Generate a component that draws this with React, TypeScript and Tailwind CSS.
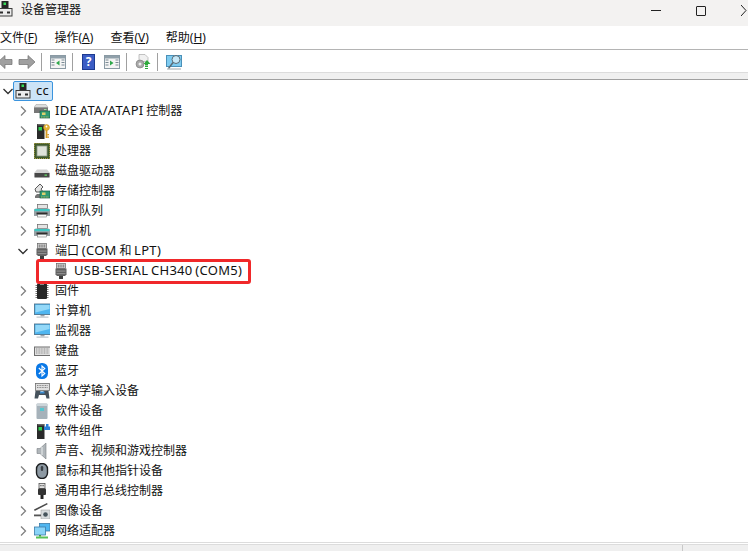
import type { ReactNode } from 'react';

const Chevron = ({ open = false }: { open?: boolean }) => (
  <svg width="10" height="10" viewBox="0 0 10 10" fill="none" stroke={open ? '#303030' : '#808080'} strokeWidth="1.3" className="shrink-0">
    {open ? <path d="M.5 3l4.500 4.500L9.500 3" /> : <path d="M3 .5L7.500 5 3 9.500" />}
  </svg>
);

const Svg = ({ children }: { children: ReactNode }) => (
  <svg width="16" height="16" viewBox="0 0 16 16" className="shrink-0">{children}</svg>
);

const Board = () => (
  <>
    <rect x="6" y="8" width="10" height="7" fill="#2f9a74" stroke="#1f5f48" strokeWidth=".7" />
    <rect x="8" y="9.500" width="3.500" height="2.500" fill="#e0d070" />
    <path d="M7 14h8" stroke="#e0c050" strokeWidth=".8" strokeDasharray="1 .6" />
  </>
);

const Printer = () => (
  <Svg>
    <rect x="3.500" y="1.500" width="10" height="4" fill="#e4e4e4" stroke="#666" strokeWidth=".7" />
    <path d="M0 7.500Q0 5.500 2 5.500h12q2 0 2 2V13H0z" fill="#98a0a4" />
    <rect x=".5" y="6" width="15" height="2.200" fill="#3fc4c0" />
    <rect x="2.500" y="9.500" width="11" height="2" fill="#2c2c2c" />
    <rect x="3.500" y="11.500" width="9" height="2.500" fill="#f6f6f6" stroke="#666" strokeWidth=".5" />
  </Svg>
);

const Monitor = () => (
  <Svg>
    <rect x=".5" y="1" width="16" height="10.500" fill="#4fb6f0" stroke="#4d7590" strokeWidth=".9" />
    <path d="M1.500 2h14v4L1.500 9.500z" fill="#93d8f8" />
    <rect x="6.500" y="12" width="4" height="1.500" fill="#9aa4aa" />
    <rect x="2.500" y="13.500" width="12" height="1.300" fill="#c4cbd0" />
  </Svg>
);

const PortIcon = () => (
  <Svg>
    <rect x="3.500" y=".5" width="9" height="5" fill="#d2d2d2" stroke="#666" strokeWidth=".7" />
    <path d="M5.300 1.500v3M7.100 1.500v3M8.900 1.500v3M10.700 1.500v3" stroke="#666" strokeWidth=".8" />
    <path d="M2.500 5.500h11v6l-1.500 1.500H4l-1.500-1.500z" fill="#606060" />
    <rect x="3.500" y="7.500" width="9" height="1.200" fill="#8e8e8e" />
    <rect x="3.500" y="10" width="9" height="1.200" fill="#8e8e8e" />
    <rect x="6" y="13" width="4" height="3" fill="#3e3e3e" />
  </Svg>
);

const Tower = () => (
  <>
    <rect x="3" y="1" width="7.500" height="15" fill="#2a2a2a" />
    <rect x="3.500" y="1" width="6.500" height="1.500" fill="#666" />
    <rect x="4.500" y="4" width="3.500" height="3.500" fill="#2fd050" />
  </>
);

const icons: Record<string, ReactNode> = {
  ide: (
    <Svg>
      <path d="M2 1.500h10l2 3H0z" fill="#dcdcdc" stroke="#999" strokeWidth=".5" />
      <rect x="0" y="4.500" width="14" height="5.500" fill="#777" />
      <rect x="10" y="6" width="2.500" height="1" fill="#9de09d" />
      <Board />
    </Svg>
  ),
  security: (
    <Svg>
      <Tower />
      <circle cx="12.500" cy="4.500" r="3" fill="#e4b232" stroke="#b98a1e" strokeWidth=".5" />
      <circle cx="12.500" cy="3.500" r=".9" fill="#fff" />
      <rect x="11.600" y="7" width="1.800" height="8" fill="#d49a24" />
      <rect x="13.300" y="11" width="1.700" height="1.300" fill="#d49a24" />
      <rect x="13.300" y="13.500" width="1.700" height="1.300" fill="#d49a24" />
    </Svg>
  ),
  cpu: (
    <Svg>
      <rect x="0" y="0" width="16" height="16" fill="#3f5a2c" />
      <rect x=".4" y=".4" width="15.200" height="15.200" fill="none" stroke="#d8b850" strokeWidth=".8" strokeDasharray="1 1" />
      <rect x="3" y="3" width="10" height="10" fill="#dfe3da" stroke="#8d9a88" strokeWidth=".8" />
    </Svg>
  ),
  disk: (
    <Svg>
      <path d="M3 6.500h10l2.500 3V14H.5V9.500z" fill="#d2d2d2" />
      <rect x=".5" y="10" width="15" height="4.500" fill="#484848" />
      <rect x="10.500" y="11.500" width="2.500" height="1.300" fill="#62d862" />
    </Svg>
  ),
  storage: (
    <Svg>
      <path d="M1 6l5-5 3 3-2 2 2 3H2z" fill="#e4e4e4" stroke="#333" strokeWidth=".8" />
      <path d="M3 11h3v4H1v-2z" fill="#777" />
      <Board />
    </Svg>
  ),
  printer: <Printer />,
  port: <PortIcon />,
  firmware: (
    <Svg>
      <rect x="3" y=".5" width="10" height="15.500" rx="1" fill="#262626" />
      <path d="M1.500 2.500H3M1.500 4.500H3M1.500 6.500H3M1.500 8.500H3M1.500 10.500H3M1.500 12.500H3M1.500 14.500H3M13 2.500h1.500M13 4.500h1.500M13 6.500h1.500M13 8.500h1.500M13 10.500h1.500M13 12.500h1.500M13 14.500h1.500" stroke="#777" strokeWidth="1" />
      <rect x="6" y=".5" width="4" height="1.500" fill="#8a8a8a" />
    </Svg>
  ),
  monitor: <Monitor />,
  keyboard: (
    <Svg>
      <rect x=".5" y="4" width="16" height="8.500" fill="#e0e0e0" stroke="#6f6f6f" />
      <path d="M2 6h13M2 8h13M2 10h13" stroke="#8f8f8f" strokeWidth="1.100" strokeDasharray="1 .6" />
    </Svg>
  ),
  bluetooth: (
    <Svg>
      <rect x="2" y="0" width="12" height="16" rx="5.500" fill="#0a78e6" />
      <path d="M4.800 5l6 5.500L8 13V3l2.800 2.500-6 5.500" fill="none" stroke="#fff" strokeWidth="1.100" />
    </Svg>
  ),
  hid: (
    <Svg>
      <rect x="1.500" y=".5" width="14" height="7" fill="#e0e0e0" stroke="#6f6f6f" strokeWidth=".8" />
      <path d="M3 2.500h11M3 4.500h11" stroke="#888" strokeDasharray="1 .6" />
      <path d="M.5 15.500l1-7.500h5v2h3V8h5l1 7.500h-3l-1-3.500H5l-1 3.500z" fill="#46525c" />
      <rect x="6" y="8.500" width="4.500" height="2" fill="#3a8bd0" />
    </Svg>
  ),
  softdev: (
    <Svg>
      <rect x="2.500" y=".5" width="11" height="15.500" rx="1" fill="#a6b2ba" />
      <rect x="3" y="1" width="10" height="2" fill="#ccd5da" />
      <rect x="6" y="5" width="4" height="3" fill="#55c6d0" />
    </Svg>
  ),
  softcomp: (
    <Svg>
      <Tower />
      <path d="M10 3.500h2V1h2.500v2.500H16v3.500h-6z" fill="#2a80d8" />
    </Svg>
  ),
  sound: (
    <Svg>
      <path d="M3 5.500h3L12 0v16l-6-5.500H3z" fill="#b0b6ba" stroke="#7a8084" strokeWidth=".6" />
      <path d="M8 4v8" stroke="#d8dcde" strokeWidth="1.500" />
    </Svg>
  ),
  mouse: (
    <Svg>
      <rect x="2.500" y=".5" width="11" height="15" rx="5.500" fill="#8d99a3" stroke="#1c1e20" strokeWidth="1.400" />
      <rect x="6.800" y="3" width="2.400" height="5" rx="1.200" fill="#3a4046" />
    </Svg>
  ),
  usb: (
    <Svg>
      <rect x="5" y=".5" width="6" height="5" fill="#e0e0e0" stroke="#555" strokeWidth=".8" />
      <rect x="6.300" y="2" width="1.200" height="1.200" fill="#555" />
      <rect x="8.500" y="2" width="1.200" height="1.200" fill="#555" />
      <rect x="4" y="5.500" width="8" height="6.500" rx="1" fill="#333" />
      <rect x="6.500" y="12" width="3" height="4" fill="#222" />
    </Svg>
  ),
  imaging: (
    <Svg>
      <path d="M0 6.500L13 0l.7 1.300L.7 8z" fill="#4a4a4a" />
      <rect x="7" y="7" width="9" height="9" fill="#d8dcde" stroke="#999" strokeWidth=".5" />
      <circle cx="11.500" cy="11.500" r="2.300" fill="#46545c" />
      <rect x="0" y="11.500" width="7" height="1.800" fill="#555" />
    </Svg>
  ),
  network: (
    <Svg>
      <rect x="5.500" y=".5" width="10.500" height="7.500" fill="#4fb6f0" stroke="#3a7ca8" strokeWidth=".8" />
      <rect x=".5" y="4" width="11" height="8" fill="#8ad4f8" stroke="#3a7ca8" strokeWidth=".8" />
      <rect x="2" y="13.500" width="12" height="2" fill="#58c058" />
      <rect x="5" y="12" width="2" height="1.500" fill="#3ea03e" />
    </Svg>
  ),
  computer: (
    <Svg>
      <rect x="4.500" y="0" width="7" height="7" fill="#262626" />
      <rect x="6.500" y="1.500" width="2.500" height="2.500" fill="#36dc58" />
      <rect x="1" y="7.500" width="14" height="7.500" fill="#ececec" stroke="#3c3c3c" />
      <rect x="3" y="10.500" width="3" height="2" fill="#2c2c2c" />
      <rect x="10" y="10.500" width="3" height="2" fill="#2c2c2c" />
    </Svg>
  ),
};

const rowsBefore = [
  ['ide', 'IDE ATA/ATAPI ', '控制器'],
  ['security', '', '安全设备'],
  ['cpu', '', '处理器'],
  ['disk', '', '磁盘驱动器'],
  ['storage', '', '存储控制器'],
  ['printer', '', '打印队列'],
  ['printer', '', '打印机'],
];

const rowsAfter = [
  ['firmware', '固件'],
  ['monitor', '计算机'],
  ['monitor', '监视器'],
  ['keyboard', '键盘'],
  ['bluetooth', '蓝牙'],
  ['hid', '人体学输入设备'],
  ['softdev', '软件设备'],
  ['softcomp', '软件组件'],
  ['sound', '声音、视频和游戏控制器'],
  ['mouse', '鼠标和其他指针设备'],
  ['usb', '通用串行总线控制器'],
  ['imaging', '图像设备'],
  ['network', '网络适配器'],
];

// latin runs are set wider than the CJK text, as in the reference
const Latin = ({ children }: { children: ReactNode }) => (
  <span className="whitespace-pre text-[13px] tracking-[0.3px] [word-spacing:-1px]">{children}</span>
);

const TreeRow = ({ icon, children, open }: { icon: string; children: ReactNode; open?: boolean }) => (
  <div className="flex h-5 items-center pl-[18px]">
    <Chevron open={open} />
    <span className="ml-[6px] flex w-[21px]">{icons[icon]}</span>
    <span className="whitespace-nowrap">{children}</span>
  </div>
);

const Sep = () => <div className="h-[18px] w-px bg-[#a0a0a0]" />;

const menus = [
  ['文件', 'F'],
  ['操作', 'A'],
  ['查看', 'V'],
  ['帮助', 'H'],
];

export default function App() {
  return (
    <div className="flex h-[551px] w-[748px] flex-col overflow-hidden bg-white text-[12px] text-[#111] [font-family:'Noto_Sans','Noto_Sans_CJK_SC',sans-serif]">
      {/* Title bar */}
      <div className="flex h-[26px] shrink-0 items-start bg-[#f3f2f1] pt-[1px]">
        <span className="ml-[-3px] flex w-[24px]">{icons.computer}</span>
        <span className="text-[12px] leading-[17px]">设备管理器</span>
        <div className="ml-auto flex items-center pt-[4px]">
          <div className="h-px w-[10px] bg-[#222]" />
          <div className="ml-[35px] h-[10px] w-[10px] rounded-[1px] border border-[#222]" />
          <svg width="10" height="11" viewBox="0 0 10 11" className="ml-[35px] mr-[-3px]" stroke="#222" fill="none"><path d="M0 0l5 5.500L0 11" /></svg>
        </div>
      </div>

      {/* Menu */}
      <div className="flex h-6 shrink-0 items-center gap-[17px] border-b border-[#b4b4b4]">
        {menus.map(([label, key]) => (
          <span key={key} className="whitespace-nowrap">
            {label}(<span className="underline">{key}</span>)
          </span>
        ))}
      </div>

      {/* Toolbar */}
      <div className="flex h-[23px] shrink-0 items-center border-b border-[#dcdcdc] pt-[1px]">
        <svg width="35" height="16" viewBox="0 0 35 16" className="mr-[6px]">
          <path d="M-2 8l7-6.500v4h7v5H5v4z" fill="#a0a0a0" stroke="#6e6e6e" strokeWidth=".7" />
          <path d="M35 8l-7-6.500v4h-9v5h9v4z" fill="#a0a0a0" stroke="#6e6e6e" strokeWidth=".7" />
        </svg>
        <Sep />
        <svg width="16" height="14" viewBox="0 0 16 14" className="ml-[8px] mr-[6px]">
          <rect x=".5" y=".5" width="15" height="13" fill="#f4f4f4" stroke="#8a9aa4" />
          <rect x="1" y="1" width="14" height="2.500" fill="#90a0aa" />
          <path d="M1.500 5h3M1.500 7.500h3M1.500 10h3M11.500 5h3M11.500 7.500h3M11.500 10h3" stroke="#7a8a94" />
          <path d="M9.500 5.500v5L6 8z" fill="#2ea84a" />
        </svg>
        <Sep />
        <div className="mx-[9px] flex h-4 w-[13px] items-center justify-center border border-[#1c3a90] bg-[#3b5cc4] text-[12px] font-bold leading-none text-white">?</div>
        <svg width="16" height="14" viewBox="0 0 16 14" className="mr-[6px]">
          <rect x=".5" y=".5" width="15" height="13" fill="#f4f4f4" stroke="#8a9aa4" />
          <rect x="1" y="1" width="14" height="2.500" fill="#90a0aa" />
          <path d="M1.500 5h3M1.500 7.500h3M1.500 10h3M11.500 5h3M11.500 7.500h3M11.500 10h3" stroke="#7a8a94" />
          <path d="M6 5.500v5L9.500 8z" fill="#2ea84a" />
        </svg>
        <Sep />
        <svg width="16" height="16" viewBox="0 0 16 16" className="ml-[8px] mr-[6px]">
          <path d="M4 .5h6l3 3v4H4z" fill="#f0f0f0" stroke="#aaa" strokeWidth=".7" />
          <circle cx="5" cy="10" r="4" fill="#a8a8a8" stroke="#777" strokeWidth=".6" />
          <circle cx="5" cy="10" r="1.500" fill="#eee" />
          <path d="M12 6l3.500 4H13v1.500h-3V10H8.500z" fill="#2eaa3c" />
          <path d="M10 12.500h3M10 14.500h3" stroke="#2eaa3c" />
        </svg>
        <Sep />
        <svg width="16" height="16" viewBox="0 0 16 16" className="ml-[8px]">
          <rect x=".5" y="1.500" width="15" height="11" fill="#7ecbf0" stroke="#4a90b8" />
          <circle cx="10" cy="5.500" r="4" fill="#c6e8f8" stroke="#5a6a74" />
          <path d="M7 8.500l-4.500 6" stroke="#5a6a74" strokeWidth="1.400" />
          <path d="M1 15h14" stroke="#a0a8ac" />
        </svg>
      </div>

      <div className="h-[7px] shrink-0 border-b border-[#a0a0a0] bg-[#f0f0f0]" />

      {/* Device tree */}
      <div className="relative flex-1 overflow-hidden pt-px">
        <div className="flex h-5 items-center pl-[3px]">
          <Chevron open />
          <div className="flex h-5 items-center rounded-[2px] border border-[#3b94de] bg-[#cce4f7] pl-[1px] pr-[3px]">
            <span className="flex w-[21px]">{icons.computer}</span>
            <Latin>cc</Latin>
          </div>
        </div>
        {rowsBefore.map(([icon, latin, text]) => (
          <TreeRow key={text} icon={icon}>
            {latin && <Latin>{latin}</Latin>}
            {text}
          </TreeRow>
        ))}
        <TreeRow icon="port" open>
          端口<Latin> (COM </Latin>和<Latin> LPT)</Latin>
        </TreeRow>
        <div className="flex h-5 items-center pl-[53px]">
          <span className="flex w-[21px]">{icons.port}</span>
          <Latin>USB-SERIAL CH340 (COM5)</Latin>
        </div>
        {rowsAfter.map(([icon, text]) => (
          <TreeRow key={text} icon={icon}>{text}</TreeRow>
        ))}
        {/* red annotation around the selected port */}
        <div className="absolute left-[36px] top-[179px] h-[25px] w-[215px] rounded-[3px] border-[3px] border-[#f0282a]" />
      </div>

      {/* Status bar */}
      <div className="flex h-[9px] shrink-0 flex-col">
        <div className="h-[3px] border-y border-[#dcdcdc] bg-white" />
        <div className="flex flex-1 justify-end bg-[#efefef]">
          <div className="mr-[65px] h-full w-px bg-[#c8c8c8]" />
        </div>
      </div>
    </div>
  );
}
